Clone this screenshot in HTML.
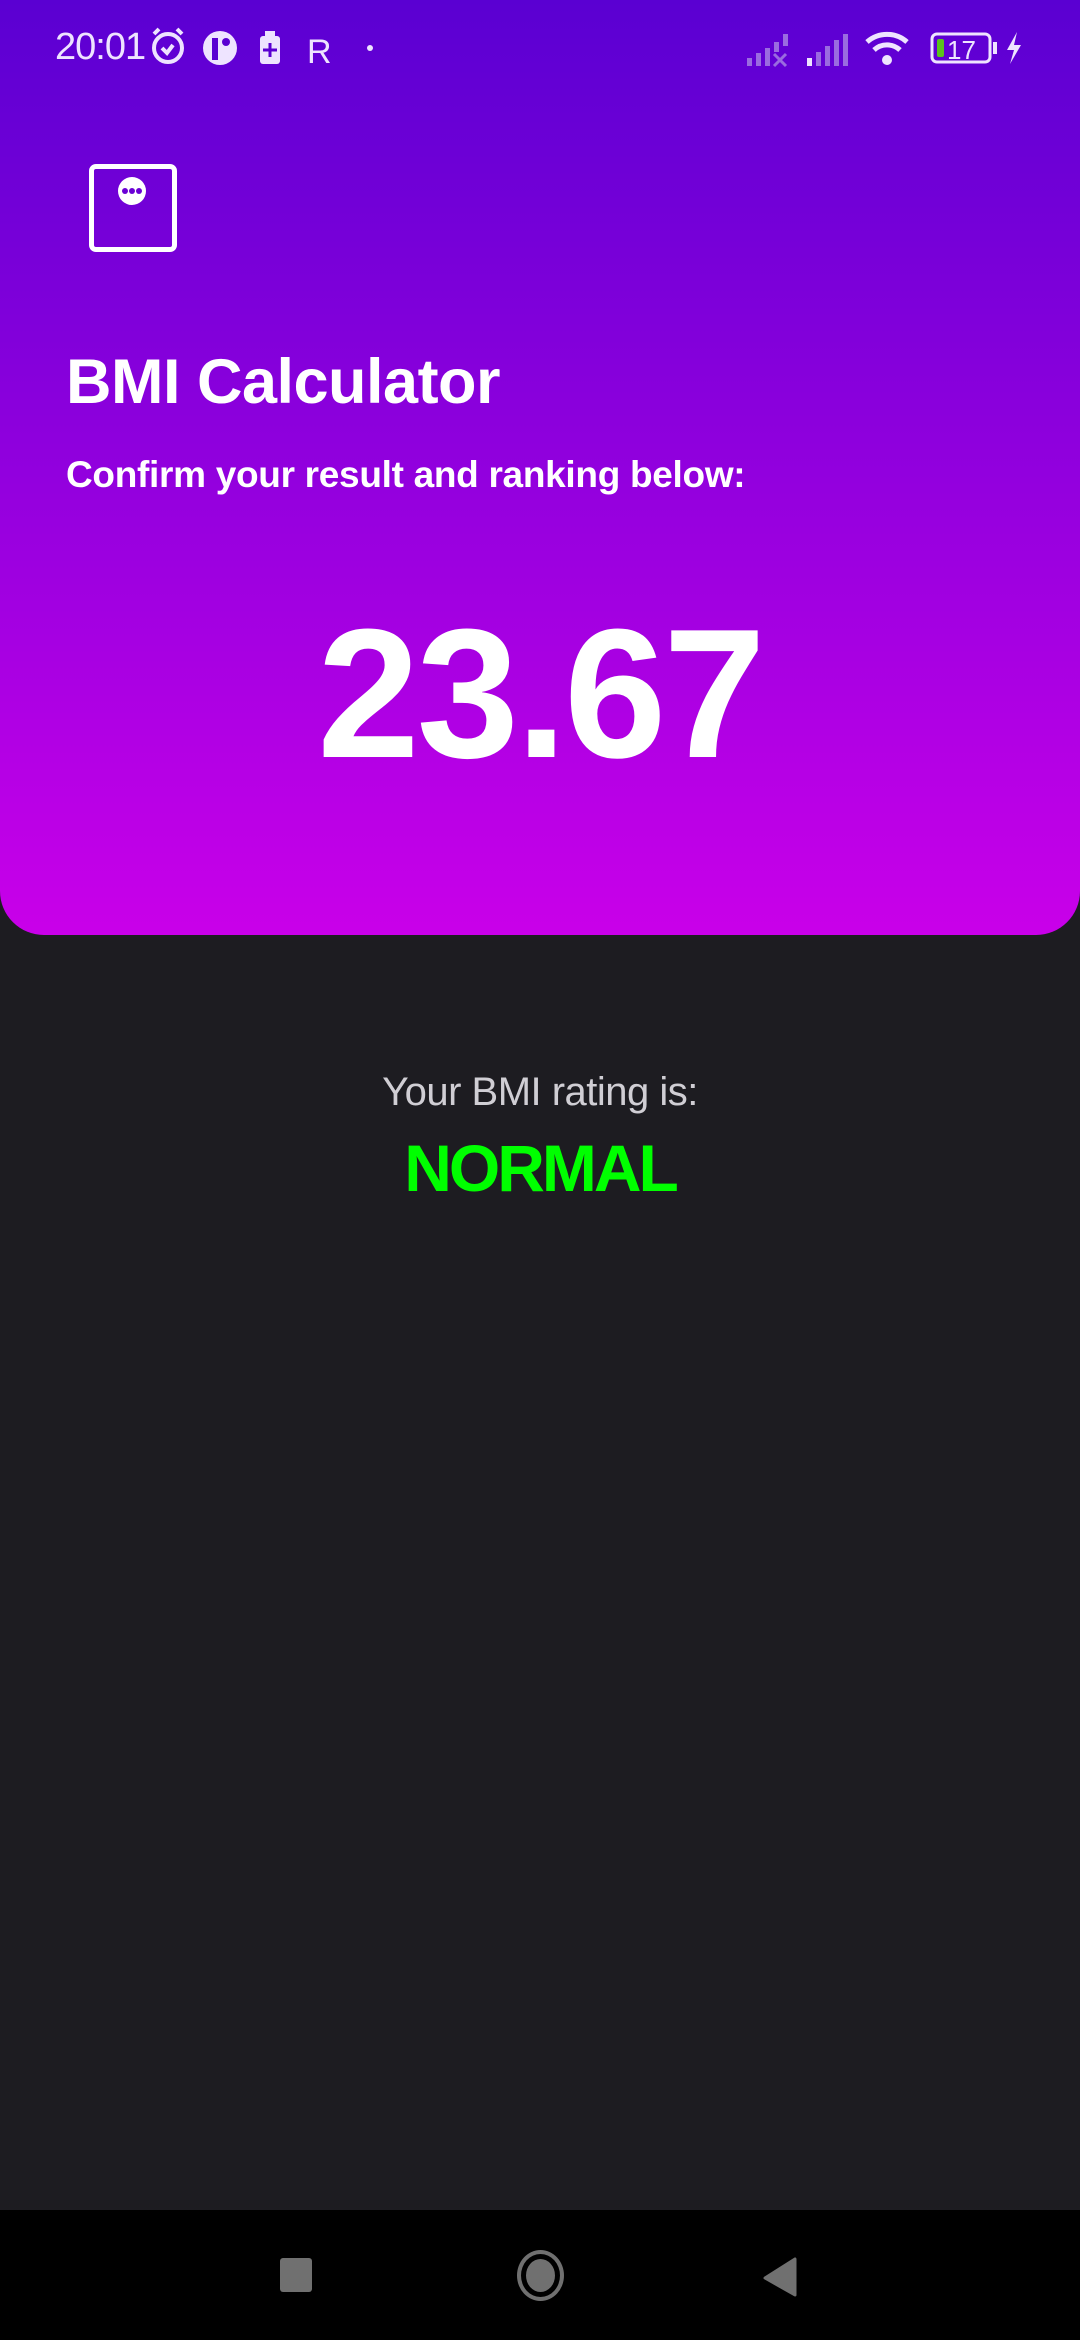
<!DOCTYPE html>
<html><head><meta charset="utf-8"><style>
*{margin:0;padding:0;box-sizing:border-box}
body{width:1080px;height:2340px;background:#1d1c21;font-family:"Liberation Sans",sans-serif;position:relative;overflow:hidden}
.panel{position:absolute;left:0;top:0;width:1080px;height:935px;background:linear-gradient(#5a00d2,#c900e9);border-radius:0 0 44px 44px}
.abs{position:absolute;white-space:nowrap}
.nav{position:absolute;left:0;top:2210px;width:1080px;height:130px;background:#000}
</style></head><body>
<div class="panel"></div>
<div class="abs" style="left:55px;top:26px;font-size:38px;color:#eee4ff;letter-spacing:-1px">20:01</div>
<svg class="abs" style="left:142px;top:24px" width="240" height="46" viewBox="0 0 240 46">
 <g fill="none" stroke="#eee4ff" stroke-width="4"><circle cx="26" cy="24" r="14"/><path d="M20 24l5 5 6-8"/><path d="M12 10l5-5M40 10l-5-5"/></g>
 <circle cx="78" cy="24" r="17" fill="#eee4ff"/><rect x="70" y="14" width="6" height="22" fill="#5a00d2"/><circle cx="84" cy="18" r="4" fill="#5a00d2"/>
 <rect x="118" y="12" width="20" height="28" rx="3" fill="#eee4ff"/><rect x="123" y="7" width="10" height="5" fill="#eee4ff"/><path d="M128 19v14M121 26h14" stroke="#5a00d2" stroke-width="3"/>
 <text x="165" y="39" font-size="34" font-family="Liberation Sans" fill="#eee4ff">R</text>
 <circle cx="228" cy="24" r="3" fill="#eee4ff"/>
</svg>
<svg class="abs" style="left:745px;top:28px" width="290" height="40" viewBox="0 0 290 40">
 <g fill="#9a6be0"><rect x="2" y="30" width="5" height="8"/><rect x="11" y="25" width="5" height="13"/><rect x="20" y="20" width="5" height="18"/><rect x="29" y="14" width="5" height="10"/><rect x="38" y="6" width="5" height="12"/></g>
 <path d="M29 26l12 12M41 26l-12 12" stroke="#9a6be0" stroke-width="3"/>
 <g fill="#9a6be0"><rect x="62" y="30" width="5" height="8" fill="#eee4ff"/><rect x="71" y="24" width="5" height="14"/><rect x="80" y="18" width="5" height="20"/><rect x="89" y="12" width="5" height="26"/><rect x="98" y="6" width="5" height="32"/></g>
 <g fill="none" stroke="#eee4ff" stroke-width="5"><path d="M122 14a30 30 0 0 1 40 0"/><path d="M129 22a19 19 0 0 1 26 0"/></g><circle cx="142" cy="32" r="5" fill="#eee4ff"/>
 <rect x="187" y="6" width="58" height="28" rx="5" fill="none" stroke="#eee4ff" stroke-width="3"/><rect x="192" y="11" width="7" height="18" rx="2" fill="#5bc21d"/><rect x="248" y="14" width="4" height="12" fill="#eee4ff"/>
 <text x="202" y="31" font-size="26" font-family="Liberation Sans" fill="#eee4ff">17</text>
 <path d="M272 4l-10 18h7l-4 14 11-19h-7z" fill="#eee4ff"/>
</svg>
<div class="abs" style="left:89px;top:164px;width:88px;height:88px;border:5px solid #fff;border-radius:7px"></div>
<svg class="abs" style="left:116px;top:177px" width="32" height="32"><ellipse cx="16" cy="14" rx="14" ry="14" fill="#fff"/><g fill="#6a00d5"><circle cx="9" cy="14" r="3"/><circle cx="16" cy="14" r="3"/><circle cx="23" cy="14" r="3"/></g></svg>
<div class="abs" style="left:66px;top:346px;font-size:63px;font-weight:bold;color:#fff;letter-spacing:-0.5px">BMI Calculator</div>
<div class="abs" style="left:66px;top:454px;font-size:37px;font-weight:bold;color:#fff;letter-spacing:-0.3px">Confirm your result and ranking below:</div>
<div class="abs" style="left:0;width:1080px;text-align:center;top:588px;font-size:184px;font-weight:bold;color:#fff;line-height:210px;letter-spacing:-3px">23.67</div>
<div class="abs" style="left:0;width:1080px;text-align:center;top:1070px;font-size:40px;color:#d0ced4;letter-spacing:-0.5px">Your BMI rating is:</div>
<div class="abs" style="left:0;width:1080px;text-align:center;top:1130px;font-size:66px;font-weight:bold;color:#00ff00;letter-spacing:-3px">NORMAL</div>
<div class="nav">
 <div class="abs" style="left:280px;top:48px;width:32px;height:34px;background:#707070;border-radius:3px"></div>
 <div class="abs" style="left:517px;top:40px;width:47px;height:51px;border:4px solid #707070;border-radius:50%"></div>
 <div class="abs" style="left:526px;top:49px;width:29px;height:33px;background:#707070;border-radius:50%"></div>
 <svg class="abs" style="left:762px;top:46px" width="36" height="42"><path d="M33 3v36L3 22z" fill="#707070" stroke="#707070" stroke-width="3" stroke-linejoin="round"/></svg>
</div>
</body></html>
